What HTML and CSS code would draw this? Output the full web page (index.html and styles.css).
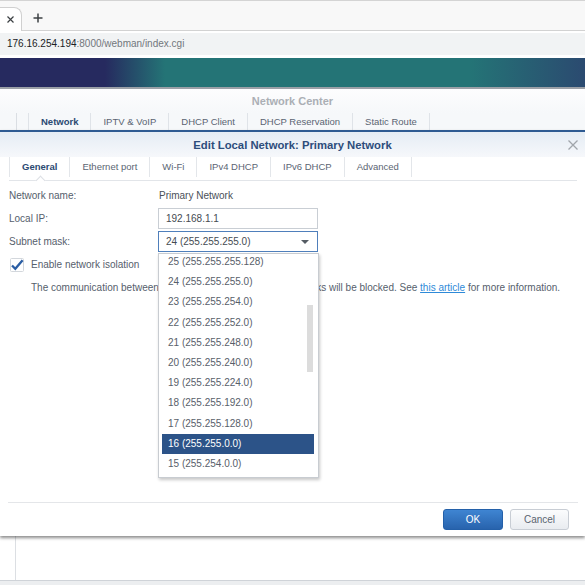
FILE: index.html
```html
<!DOCTYPE html>
<html lang="en">
<head>
    <meta charset="UTF-8">
    <meta name="viewport" content="width=device-width, initial-scale=1.0">
    <title>Network Center</title>
    <link rel="stylesheet" href="styles.css">
</head>
<body>
    <div class="tab-strip">
        <div class="browser-tab">
            <svg width="7" height="7" viewBox="0 0 7 7"><path d="M0.5 0.5L6.5 6.5M6.5 0.5L0.5 6.5" stroke="#3c4043" stroke-width="1.2"/></svg>
        </div>
        <div class="new-tab">
            <svg width="10" height="10" viewBox="0 0 10 10"><path d="M5 0.5V9.5M0.5 5H9.5" stroke="#3c4043" stroke-width="1.5"/></svg>
        </div>
    </div>
    <div class="toolbar">
        <div class="omnibox"><span class="host">176.16.254.194</span>:8000/webman/index.cgi</div>
    </div>
    <div class="banner"></div>

    <div class="app-title">Network Center</div>
    <div class="app-tabs">
        <div class="app-tabs-inner">
            <span class="app-tab active">Network</span>
            <span class="app-tab">IPTV &amp; VoIP</span>
            <span class="app-tab">DHCP Client</span>
            <span class="app-tab">DHCP Reservation</span>
            <span class="app-tab">Static Route</span>
        </div>
    </div>

    <div class="dialog">
        <div class="dialog-header">
            <span class="dialog-title">Edit Local Network: Primary Network</span>
            <svg class="dialog-close" width="10" height="10" viewBox="0 0 10 10"><path d="M0.5 0.5L9.5 9.5M9.5 0.5L0.5 9.5" stroke="#a0a5ab" stroke-width="1.3"/></svg>
        </div>
        <div class="dialog-tabs">
            <span class="dialog-tab active">General</span>
            <span class="dialog-tab">Ethernet port</span>
            <span class="dialog-tab">Wi-Fi</span>
            <span class="dialog-tab">IPv4 DHCP</span>
            <span class="dialog-tab">IPv6 DHCP</span>
            <span class="dialog-tab">Advanced</span>
        </div>
        <div class="dialog-body">
            <div class="form-row">
                <label>Network name:</label>
                <span class="value">Primary Network</span>
            </div>
            <div class="form-row">
                <label>Local IP:</label>
                <div class="field">192.168.1.1</div>
            </div>
            <div class="form-row">
                <label>Subnet mask:</label>
                <div class="field select">24 (255.255.255.0)<span class="caret"></span></div>
            </div>
            <div class="check-row">
                <svg class="checkbox" width="14" height="14" viewBox="0 0 14 14">
                    <rect x="0.5" y="0.5" width="13" height="13" rx="1" fill="#fff" stroke="#d3d7dc"/>
                    <path d="M2 7.5L5.3 10.8L12.6 2.2" fill="none" stroke="#2b5ea4" stroke-width="2.3"/>
                </svg>
                <span>Enable network isolation</span>
            </div>
            <p class="hint">The communication between this network and other local networks will be blocked. See <a href="#">this article</a> for more information.</p>

            <div class="dropdown">
                <ul class="options">
                    <li>25 (255.255.255.128)</li>
                    <li>24 (255.255.255.0)</li>
                    <li>23 (255.255.254.0)</li>
                    <li>22 (255.255.252.0)</li>
                    <li>21 (255.255.248.0)</li>
                    <li>20 (255.255.240.0)</li>
                    <li>19 (255.255.224.0)</li>
                    <li>18 (255.255.192.0)</li>
                    <li>17 (255.255.128.0)</li>
                    <li class="selected">16 (255.255.0.0)</li>
                    <li>15 (255.254.0.0)</li>
                </ul>
                <div class="scroll-thumb"></div>
            </div>
        </div>
        <div class="dialog-footer">
            <button class="btn btn-ok">OK</button>
            <button class="btn btn-cancel">Cancel</button>
        </div>
    </div>

    <div class="app-content">
        <div class="app-pane"></div>
    </div>
</body>
</html>
```

FILE: styles.css
```css
body {
    margin: 0;
    width: 585px;
    height: 585px;
    overflow: hidden;
    font-family: "Liberation Sans", Arial, sans-serif;
    font-size: 10px;
    background-color: #eceef0;
}
.tab-strip {
    box-sizing: border-box;
    height: 31px;
    border-top: 1px solid #d4d4d4;
    border-bottom: 1px solid #d2d2d2;
    background-color: #f8f8f8;
    display: flex;
    align-items: flex-end;
}
.browser-tab {
    position: relative;
    width: 22px;
    height: 24px;
    margin-bottom: -1px;
    background: #fff;
    border-top: 1px solid #d0d0d0;
    border-right: 1px solid #d0d0d0;
    border-top-right-radius: 8px;
    display: flex;
    align-items: center;
    justify-content: center;
    box-sizing: border-box;
}
.new-tab {
    height: 24px;
    margin-left: 11px;
    display: flex;
    align-items: center;
}
.toolbar {
    box-sizing: border-box;
    height: 27px;
    padding-top: 2px;
    background: #fff;
}
.omnibox {
    height: 22px;
    line-height: 22px;
    padding-left: 7px;
    background: #f1f3f4;
    color: #72777c;
}
.omnibox .host {
    color: #202124;
}
.banner {
    height: 29px;
    border-bottom: 2px solid #9ba0a7;
    background: linear-gradient(90deg, #262a5f 0, #262a5f 105px, #247476 165px, #247476 470px, #2b4a70 585px);
}
.app-title {
    height: 24px;
    line-height: 24px;
    text-align: center;
    font-weight: bold;
    font-size: 11px;
    color: #abafb5;
    background: linear-gradient(#fdfdfe, #f6f8fa);
}
.app-tabs {
    height: 17px;
    background: #f6f8fa;
    display: flex;
}
.app-tabs-inner {
    margin-left: 16px;
    padding-left: 11px;
    border-left: 1px solid #dadee3;
    display: flex;
}
.app-tab {
    padding: 0 12px;
    line-height: 17px;
    font-size: 9.5px;
    color: #5a6472;
    border-left: 1px solid #dfe3e8;
}
.app-tab:last-child {
    border-right: 1px solid #dfe3e8;
}
.app-tab.active {
    font-weight: bold;
    color: #2c4a72;
}
.dialog {
    position: relative;
    z-index: 1;
    box-sizing: border-box;
    height: 406px;
    border-top: 2px solid #2f5b92;
    background: #fff;
    display: flex;
    flex-direction: column;
    box-shadow: 0 2px 3px rgba(0, 0, 0, 0.45);
}
.dialog-header {
    height: 25px;
    display: grid;
    grid-template-columns: 1fr auto 1fr;
    align-items: center;
    background: linear-gradient(#e5ecf4, #f6f8fb);
}
.dialog-title {
    grid-column: 2;
    font-weight: bold;
    font-size: 11.3px;
    color: #2d4d7c;
}
.dialog-close {
    justify-self: end;
    margin-right: 7px;
}
.dialog-tabs {
    display: flex;
    margin: 0 8px 0 9px;
    padding-bottom: 3px;
    border-bottom: 1px solid #e2e5e9;
}
.dialog-tab {
    position: relative;
    height: 20px;
    line-height: 19px;
    padding: 0 12px;
    font-size: 9.5px;
    color: #5b6573;
    border-left: 1px solid #e3e6ea;
}
.dialog-tab:last-child {
    border-right: 1px solid #e3e6ea;
}
.dialog-tab.active {
    font-weight: bold;
    color: #2c4a72;
}
.dialog-tab.active::after {
    content: "";
    position: absolute;
    left: 50%;
    bottom: -7px;
    width: 6px;
    height: 6px;
    margin-left: -3px;
    background: #fff;
    border-left: 1px solid #dcdfe4;
    border-top: 1px solid #dcdfe4;
    transform: rotate(45deg);
}
.dialog-body {
    flex: 1;
    position: relative;
    padding: 3px 9px 0;
}
.form-row {
    height: 23px;
    display: flex;
    align-items: center;
}
.form-row label {
    width: 149px;
    color: #56606c;
}
.value {
    padding-left: 1px;
    color: #4a5058;
}
.field {
    box-sizing: border-box;
    width: 160px;
    height: 21px;
    line-height: 19px;
    padding-left: 7px;
    border: 1px solid #c9ced4;
    color: #454b52;
}
.select {
    border-color: #4f7fbb;
    display: flex;
    justify-content: space-between;
    align-items: center;
}
.caret {
    margin-right: 8px;
    border-left: 4px solid transparent;
    border-right: 4px solid transparent;
    border-top: 4px solid #555c64;
}
.check-row {
    height: 23px;
    display: flex;
    align-items: center;
    gap: 7px;
    color: #56606c;
}
.checkbox {
    margin-left: 1px;
}
.hint {
    margin: 0;
    height: 23px;
    line-height: 23px;
    padding-left: 22px;
    color: #56606c;
    white-space: nowrap;
}
.hint a {
    color: #2e8ad8;
}
.dropdown {
    position: absolute;
    top: 72px;
    left: 158px;
    box-sizing: border-box;
    width: 161px;
    height: 225px;
    padding: 0 4px 0 3px;
    background: #fff;
    border: 1px solid #c8ccd1;
    box-shadow: 1px 2px 3px rgba(0, 0, 0, 0.22);
    overflow: hidden;
}
.options {
    list-style: none;
    margin: -2px 0 0;
    padding: 0;
}
.options li {
    height: 20.2px;
    line-height: 20.2px;
    padding-left: 6px;
    color: #58606a;
}
.options li.selected {
    background: #2c5388;
    color: #fff;
}
.scroll-thumb {
    position: absolute;
    right: 5px;
    top: 51px;
    width: 6px;
    height: 67px;
    background: #dcdcdc;
}
.dialog-footer {
    margin: 0 7px 0 8px;
    padding: 6px 9px 6px 0;
    border-top: 1px solid #e4e6e9;
    display: flex;
    justify-content: flex-end;
    gap: 7px;
}
.btn {
    box-sizing: border-box;
    height: 21px;
    border-radius: 3px;
    font-family: "Liberation Sans", Arial, sans-serif;
    font-size: 10px;
    padding: 0;
}
.btn-ok {
    width: 60px;
    color: #fff;
    border: 1px solid #2460a9;
    background: linear-gradient(#3f85d2, #2863ad);
}
.btn-cancel {
    width: 59px;
    color: #5a6470;
    border: 1px solid #c8cdd4;
    background: linear-gradient(#fbfcfd, #e9ecf0);
}
.app-content {
    height: 44px;
    background: #fff;
    border-bottom: 1px solid #cfd3d8;
}
.app-pane {
    height: 100%;
    margin-left: 15px;
    border-left: 1px solid #dcdfe3;
}
```
